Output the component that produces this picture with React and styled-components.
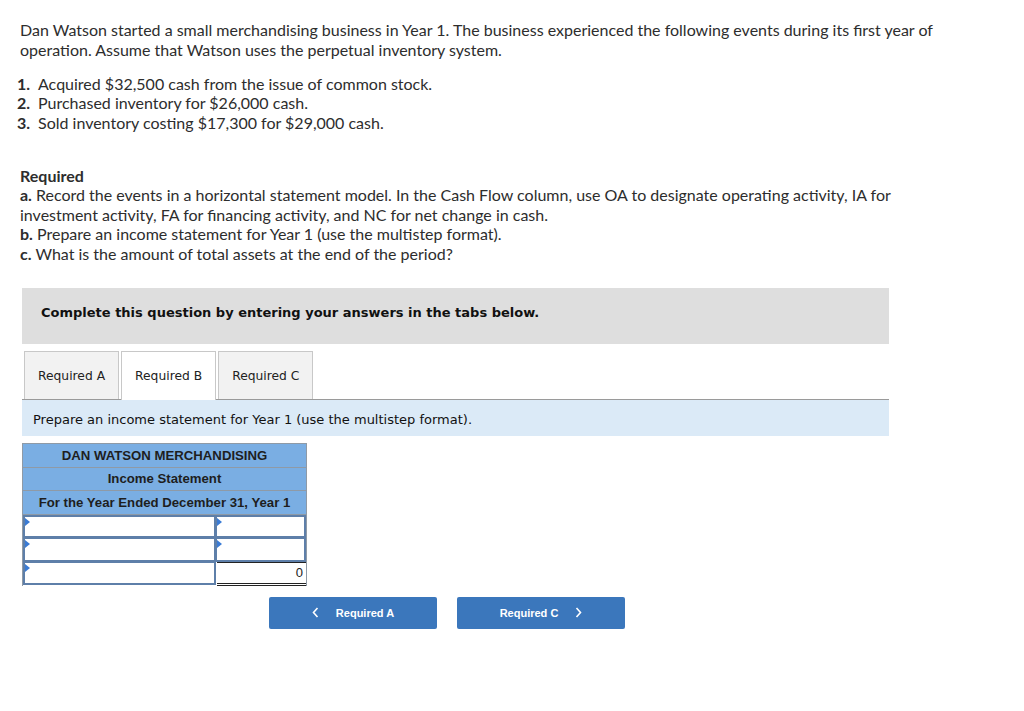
import React from "react"
import styled, { createGlobalStyle } from "styled-components"

const GlobalStyle = createGlobalStyle`
  body {
    margin: 0;
    background: #ffffff;
  }
`

const Page = styled.div`
  padding: 20px 20px 40px 20px;
  font-family: Lato, "Liberation Sans", sans-serif;
  color: #2d2d2d;
`

const TextBlock = styled.div`
  width: 940px;
  font-size: 16px;
  line-height: 19.5px;
`

const Para = styled.p`
  margin: 0;
`

const EventList = styled.ol`
  list-style: none;
  margin: 14.5px 0 0 0;
  padding: 0;
`

const EventItem = styled.li`
  display: flex;
  margin-left: -3px;
`

const Num = styled.b`
  width: 21px;
  font-weight: 700;
`

const RequiredBlock = styled.div`
  margin-top: 33.5px;
`

const RequiredTitle = styled.div`
  font-weight: 700;
`

const Quiz = styled.div`
  margin: 25px 0 0 2px;
  width: 867px;
  font-family: "DejaVu Sans", Verdana, sans-serif;
`

const Instruction = styled.div`
  background: #dedede;
  height: 56px;
  box-sizing: border-box;
  display: flex;
  align-items: center;
  padding: 0 0 8px 19px;
  font-size: 13px;
  font-weight: 700;
  color: #111;
`

const TabRow = styled.div`
  display: flex;
  gap: 2px;
  margin-top: 7px;
  padding-left: 2px;
`

const Tab = styled.div`
  height: 48px;
  box-sizing: border-box;
  padding: 0 13px;
  display: flex;
  align-items: center;
  font-size: 12.3px;
  color: #222;
  border: 1px solid #c8c8c8;
  border-bottom: none;
  background: ${p => (p.$active ? "#ffffff" : "#f2f2f2")};
  ${p => p.$active && "height: 49px; padding-bottom: 1px; margin-bottom: -1px; position: relative;"}
`

const Prompt = styled.div`
  background: #dbeaf7;
  border-top: 1px solid #9a9a9a;
  height: 37px;
  box-sizing: border-box;
  display: flex;
  align-items: center;
  padding: 2px 0 0 11px;
  font-size: 13px;
  color: #111;
`

const Statement = styled.div`
  margin-top: 7px;
  width: 283px;
  display: grid;
  grid-template-columns: 193px 90px;
  border: 1px solid #8f9aa6;
  border-bottom: none;
  font-family: "Liberation Sans", Arial, sans-serif;
`

const HeadCell = styled.div`
  grid-column: 1 / 3;
  background: #7aaee3;
  height: 22.5px;
  border-bottom: 1px solid #8f9aa6;
  display: flex;
  align-items: center;
  justify-content: center;
  font-size: 13.2px;
  font-weight: 700;
  color: #1e1e1e;
`

const InputCell = styled.div`
  position: relative;
  height: 23.5px;
  box-sizing: border-box;
  border: 2px solid #5e7fa9;
  border-top-width: ${p => (p.$first ? 2 : 1)}px;
  border-left-width: ${p => (p.$right ? 1 : 2)}px;
  background: #fff;
  display: flex;
  align-items: center;
  justify-content: flex-end;
  padding-right: 3px;
  font-size: 13px;
  color: #222;
  ${p =>
    p.$total &&
    `
    border: none;
    border-top: 1px solid #222;
    border-bottom: 3px double #222;
    margin-left: 1px;
    height: 24px;
  `}
`

const Marker = styled.span`
  position: absolute;
  top: 1px;
  left: 0;
  width: 0;
  height: 0;
  border-top: 4px solid transparent;
  border-bottom: 4px solid transparent;
  border-left: 5px solid #3a7bd5;
`

const NavRow = styled.div`
  display: flex;
  gap: 20px;
  margin: 11px 0 0 247px;
`

const NavButton = styled.button`
  width: 168px;
  height: 32px;
  background: #3b77bc;
  border: none;
  border-radius: 2px;
  color: #fff;
  font-family: "Liberation Sans", Arial, sans-serif;
  font-size: 11px;
  font-weight: 700;
  display: flex;
  align-items: center;
  justify-content: center;
  gap: 17px;
`

const Chevron = ({ dir }) => (
  <svg width="7" height="11" viewBox="0 0 7 11">
    <path
      d={dir === "left" ? "M5.5 1 L1.5 5.5 L5.5 10" : "M1.5 1 L5.5 5.5 L1.5 10"}
      fill="none"
      stroke="#fff"
      strokeWidth="1.6"
    />
  </svg>
)

const rows = [
  { right: null },
  { right: null },
  { right: "0" },
]

const App = () => (
  <Page>
    <GlobalStyle />
    <TextBlock>
      <Para>
        Dan Watson started a small merchandising business in Year 1. The business experienced the
        following events during its first year of operation. Assume that Watson uses the perpetual
        inventory system.
      </Para>
      <EventList>
        <EventItem><Num>1.</Num>Acquired $32,500 cash from the issue of common stock.</EventItem>
        <EventItem><Num>2.</Num>Purchased inventory for $26,000 cash.</EventItem>
        <EventItem><Num>3.</Num>Sold inventory costing $17,300 for $29,000 cash.</EventItem>
      </EventList>
      <RequiredBlock>
        <RequiredTitle>Required</RequiredTitle>
        <div>
          <b>a.</b> Record the events in a horizontal statement model. In the Cash Flow column, use
          OA to designate operating activity, IA for investment activity, FA for financing activity,
          and NC for net change in cash.
        </div>
        <div><b>b.</b> Prepare an income statement for Year 1 (use the multistep format).</div>
        <div><b>c.</b> What is the amount of total assets at the end of the period?</div>
      </RequiredBlock>
    </TextBlock>
    <Quiz>
      <Instruction>Complete this question by entering your answers in the tabs below.</Instruction>
      <TabRow>
        <Tab>Required A</Tab>
        <Tab $active>Required B</Tab>
        <Tab>Required C</Tab>
      </TabRow>
      <Prompt>Prepare an income statement for Year 1 (use the multistep format).</Prompt>
      <Statement>
        <HeadCell>DAN WATSON MERCHANDISING</HeadCell>
        <HeadCell>Income Statement</HeadCell>
        <HeadCell>For the Year Ended December 31, Year 1</HeadCell>
        {rows.map((r, i) => (
          <React.Fragment key={i}>
            <InputCell $first={i === 0}><Marker /></InputCell>
            {r.right ? (
              <InputCell $right $total>{r.right}</InputCell>
            ) : (
              <InputCell $right $first={i === 0}><Marker /></InputCell>
            )}
          </React.Fragment>
        ))}
      </Statement>
      <NavRow>
        <NavButton><Chevron dir="left" />Required A</NavButton>
        <NavButton>Required C<Chevron dir="right" /></NavButton>
      </NavRow>
    </Quiz>
  </Page>
)

export default App
